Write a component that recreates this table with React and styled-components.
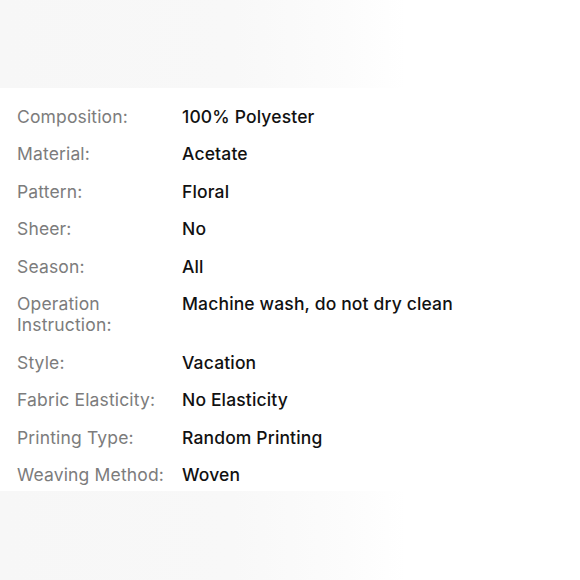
import React from "react"
import styled, { createGlobalStyle } from "styled-components"

const specs = [
  ["Composition:", "100% Polyester"],
  ["Material:", "Acetate"],
  ["Pattern:", "Floral"],
  ["Sheer:", "No"],
  ["Season:", "All"],
  ["Operation Instruction:", "Machine wash, do not dry clean"],
  ["Style:", "Vacation"],
  ["Fabric Elasticity:", "No Elasticity"],
  ["Printing Type:", "Random Printing"],
  ["Weaving Method:", "Woven"],
]

function App() {
  return (
    <Page>
      <GlobalStyle />
      <Band />
      <Table>
        {specs.map(([label, value]) => (
          <React.Fragment key={label}>
            <Label>{label}</Label>
            <Value>{value}</Value>
          </React.Fragment>
        ))}
      </Table>
      <Band $bottom />
    </Page>
  )
}

export default App

const GlobalStyle = createGlobalStyle`
  html, body {
    margin: 0;
    padding: 0;
    background: #ffffff;
  }
  body {
    font-family: Inter, "Noto Sans", "Liberation Sans", sans-serif;
  }
`

const Page = styled.div`
  width: 580px;
  height: 580px;
  display: flex;
  flex-direction: column;
  background: #ffffff;
  overflow: hidden;
`

const Band = styled.div`
  height: ${(p) => (p.$bottom ? "89px" : "88px")};
  flex-shrink: 0;
  margin-top: ${(p) => (p.$bottom ? "auto" : "0")};
  background: linear-gradient(
    to right,
    #f7f7f7 0%,
    #f8f8f8 40%,
    #fcfcfc 60%,
    #ffffff 70%
  );
`

const Table = styled.div`
  display: grid;
  grid-template-columns: 152px 1fr;
  column-gap: 13px;
  row-gap: 16.5px;
  padding: 17.5px 17px 0;
  font-size: 17.5px;
  line-height: 21px;
  letter-spacing: 0.15px;
`

const Label = styled.div`
  color: #7c7c7c;
  font-weight: 400;
`

const Value = styled.div`
  color: #111111;
  font-weight: 500;
`
